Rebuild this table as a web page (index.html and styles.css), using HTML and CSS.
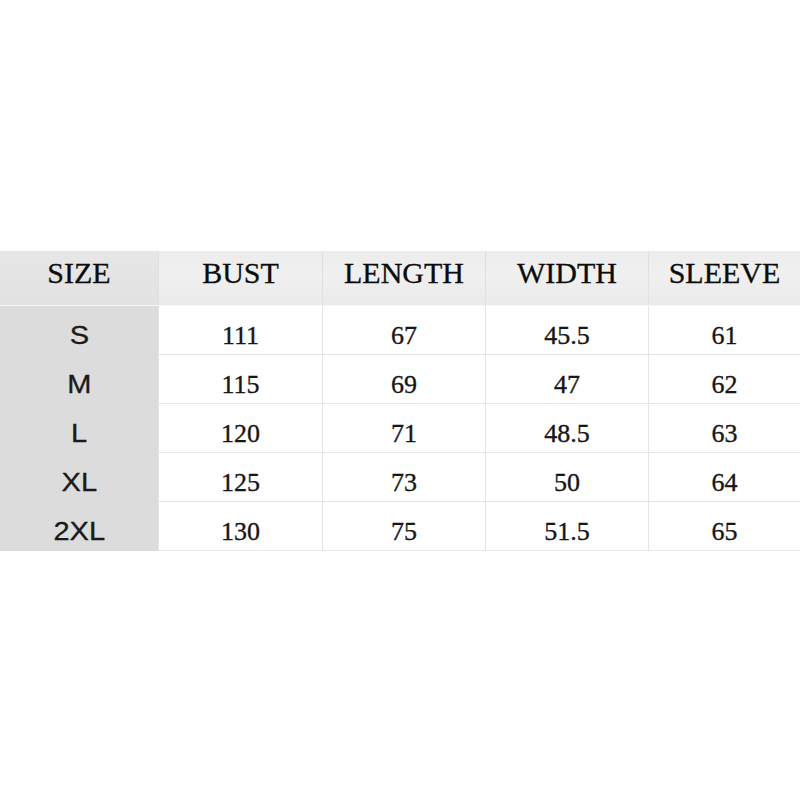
FILE: index.html
```html
<!DOCTYPE html>
<html>
<head>
<meta charset="utf-8">
<link rel="stylesheet" href="styles.css">
</head>
<body>
<div class="page">
  <div class="chart">
    <div class="row head">
      <div class="cell">SIZE</div>
      <div class="cell">BUST</div>
      <div class="cell">LENGTH</div>
      <div class="cell">WIDTH</div>
      <div class="cell">SLEEVE</div>
    </div>
    <div class="row">
      <div class="cell size"><span>S</span></div>
      <div class="cell">111</div><div class="cell">67</div><div class="cell">45.5</div><div class="cell">61</div>
    </div>
    <div class="row">
      <div class="cell size"><span>M</span></div>
      <div class="cell">115</div><div class="cell">69</div><div class="cell">47</div><div class="cell">62</div>
    </div>
    <div class="row">
      <div class="cell size"><span>L</span></div>
      <div class="cell">120</div><div class="cell">71</div><div class="cell">48.5</div><div class="cell">63</div>
    </div>
    <div class="row">
      <div class="cell size"><span>XL</span></div>
      <div class="cell">125</div><div class="cell">73</div><div class="cell">50</div><div class="cell">64</div>
    </div>
    <div class="row last">
      <div class="cell size"><span>2XL</span></div>
      <div class="cell">130</div><div class="cell">75</div><div class="cell">51.5</div><div class="cell">65</div>
    </div>
  </div>
</div>
</body>
</html>
```

FILE: styles.css
```css
html, body {
  margin: 0;
  padding: 0;
  background: #ffffff;
}
.page {
  width: 800px;
  height: 800px;
  padding-top: 251px;
  box-sizing: border-box;
}
.chart {
  width: 800px;
}
.row {
  display: grid;
  grid-template-columns: 158px 164px 163px 163px 152px;
  height: 49px;
  border-bottom: 1px solid #e4e4e4;
  box-sizing: border-box;
}
.row .cell {
  font-family: "Liberation Serif", "Times New Roman", serif;
  font-size: 26px;
  color: #161616;
  -webkit-text-stroke: 0.35px #161616;
  text-align: center;
  line-height: 39px;
  padding-top: 10px;
  border-left: 1px solid #e4e4e4;
  box-sizing: border-box;
}
.row .cell:first-child {
  border-left: none;
}
.row .cell.size {
  background: #dcdcdc;
  font-family: "Liberation Sans", Arial, sans-serif;
  font-size: 25px;
  color: #1a1a1a;
  -webkit-text-stroke: 0.3px #1a1a1a;
}
.size span {
  display: inline-block;
  transform: scaleX(1.16);
}
.head {
  height: 55px;
  background: linear-gradient(to bottom, #ececec 0%, #f0f0f0 40%, #eaeaea 100%);
  border-bottom: 1px solid #f6f6f6;
}
.head .cell {
  font-size: 30px;
  color: #0c0c0c;
  -webkit-text-stroke: 0.3px #0c0c0c;
  line-height: 44px;
  padding-top: 0;
  padding-bottom: 10px;
  border-left: 1px solid #e0e0e0;
}
.head .cell:first-child {
  background: linear-gradient(to bottom, #e6e6e6, #e2e2e2);
}
.row.last {
  border-bottom: 1px solid #e8e8e8;
}
```
